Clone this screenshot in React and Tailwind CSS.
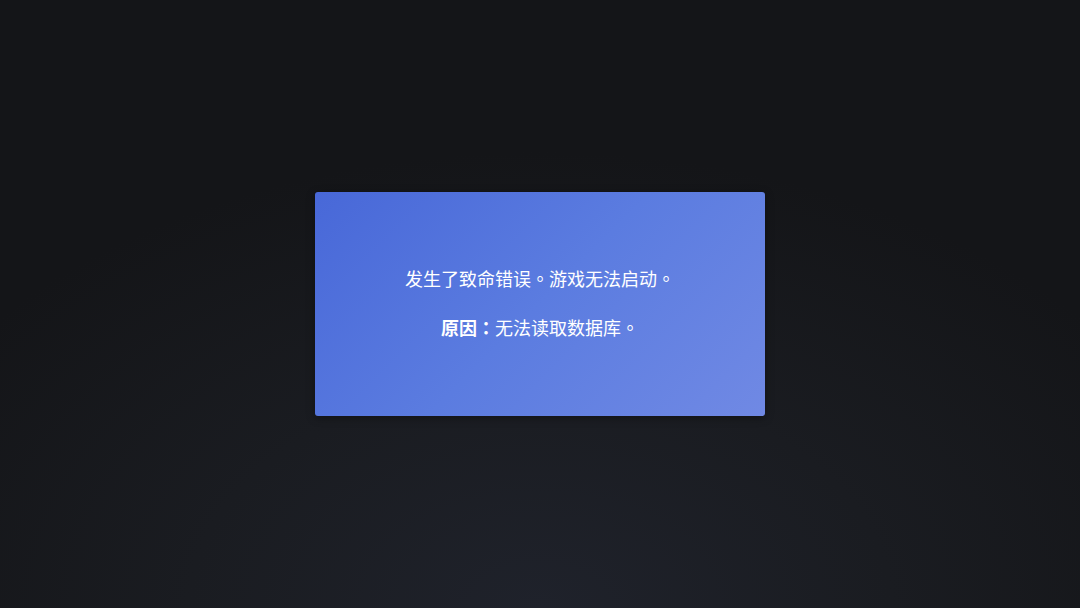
export default function App() {
  return (
    <div
      className="w-[1080px] h-[608px] flex items-center justify-center bg-[#141518] bg-[radial-gradient(ellipse_65%_75%_at_50%_100%,#1f222b_0%,#1a1c21_50%,#141518_100%)]"
      style={{ fontFamily: '"Noto Sans CJK TC", "Noto Sans", sans-serif' }}
    >
      <div className="w-[450px] h-[224px] rounded-[3px] bg-[linear-gradient(135deg,#4868d8_0%,#5b7ce0_50%,#7089e4_100%)] shadow-[0_2px_8px_rgba(0,0,0,0.35)] flex flex-col items-center justify-center gap-[22px] text-white text-[18px] leading-[27px]">
        <p className="-mt-[2px]">发生了致命错误。游戏无法启动。</p>
        <p>
          <span className="font-bold">原因：</span>无法读取数据库。
        </p>
      </div>
    </div>
  );
}
